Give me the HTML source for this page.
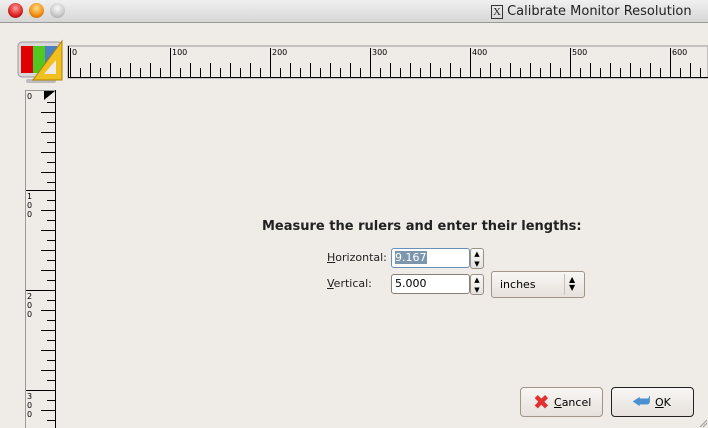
<!DOCTYPE html>
<html><head><style>
body{margin:0;width:708px;height:428px;background:#efebe7;font-family:"DejaVu Sans","Liberation Sans",sans-serif;overflow:hidden;position:relative}
.tb{position:absolute;left:0;top:0;width:708px;height:22px;background:linear-gradient(#f0f0f0,#d6d6d6);border-bottom:1px solid #9a9a9a}
.dot{position:absolute;top:3px;width:15px;height:15px;border-radius:50%}
.t{position:absolute;font-size:13px;color:#222}
.in{position:absolute;height:20px;background:#fff;border:1px solid #8a7f74;border-radius:3px;box-sizing:border-box;font-size:11px;line-height:18px;padding-left:3px}
.spin{position:absolute;width:14px;height:21px;border:1px solid #9a9086;border-radius:3px;background:linear-gradient(#fafafa,#e6e2de);box-sizing:border-box}
.btn{position:absolute;height:30px;border:1px solid #a09488;border-radius:4px;background:linear-gradient(#f8f6f4,#e6e1dc);box-sizing:border-box;font-size:11px}
</style></head><body>
<div class="tb">
<div class="dot" style="left:8px;background:radial-gradient(circle at 50% 35%,#ff9c9c,#d82020 60%,#8a0000)"></div>
<div class="dot" style="left:29px;background:radial-gradient(circle at 50% 35%,#ffe08a,#f08a10 60%,#a05000)"></div>
<div class="dot" style="left:50px;background:radial-gradient(circle at 50% 35%,#fafafa,#c8c8c8 60%,#909090)"></div>
<div class="t" style="left:491px;top:4px;font-size:13px"><span style="font-family:'Liberation Serif',serif;border:1px solid #333;font-size:11px;padding:0 1px">X</span> Calibrate Monitor Resolution</div>
</div>
<svg width="708" height="428" style="position:absolute;left:0;top:0">
<rect x="18" y="42" width="44" height="35" rx="4" fill="#d8d8d8" stroke="#999"/>
<rect x="21" y="46" width="12" height="27" fill="#e00000"/><rect x="33" y="46" width="12" height="27" fill="#50c820"/><rect x="45" y="46" width="12" height="27" fill="#4a80c0"/>
<rect x="26" y="79" width="30" height="4" rx="2" fill="#bbb"/>
<polygon points="62,41 62,80 33,80" fill="#f0c020" stroke="#b08000"/>
<polygon points="56,60 56,74 44,74" fill="#efebe7"/>
<rect x="68" y="46" width="640" height="32" fill="#efebe7" stroke="#999"/>
<line x1="68" y1="77.5" x2="708" y2="77.5" stroke="#000"/>
<line x1="68.5" y1="46" x2="68.5" y2="78" stroke="#000"/>
<g stroke="#000" stroke-width="1" font-size="8" font-family="DejaVu Sans" fill="#000">
<path d="M70.5 48V77M80.5 68V77M90.5 63V77M100.5 68V77M110.5 63V77M120.5 68V77M130.5 63V77M140.5 68V77M150.5 63V77M160.5 68V77M170.5 48V77M180.5 68V77M190.5 63V77M200.5 68V77M210.5 63V77M220.5 68V77M230.5 63V77M240.5 68V77M250.5 63V77M260.5 68V77M270.5 48V77M280.5 68V77M290.5 63V77M300.5 68V77M310.5 63V77M320.5 68V77M330.5 63V77M340.5 68V77M350.5 63V77M360.5 68V77M370.5 48V77M380.5 68V77M390.5 63V77M400.5 68V77M410.5 63V77M420.5 68V77M430.5 63V77M440.5 68V77M450.5 63V77M460.5 68V77M470.5 48V77M480.5 68V77M490.5 63V77M500.5 68V77M510.5 63V77M520.5 68V77M530.5 63V77M540.5 68V77M550.5 63V77M560.5 68V77M570.5 48V77M580.5 68V77M590.5 63V77M600.5 68V77M610.5 63V77M620.5 68V77M630.5 63V77M640.5 68V77M650.5 63V77M660.5 68V77M670.5 48V77M680.5 68V77M690.5 63V77M700.5 68V77"/>
<g stroke="none"><text x="72" y="55">0</text><text x="172" y="55">100</text><text x="272" y="55">200</text><text x="372" y="55">300</text><text x="472" y="55">400</text><text x="572" y="55">500</text><text x="672" y="55">600</text></g>
</g>
<rect x="25.5" y="90.5" width="30" height="340" fill="#efebe7" stroke="#999"/>
<line x1="55.5" y1="90" x2="55.5" y2="428" stroke="#000"/>
<polygon points="44,91 55,91 44,100" fill="#000"/>
<g stroke="#000">
<path d="M47 102.5H55M41 112.5H55M47 122.5H55M41 132.5H55M47 142.5H55M41 152.5H55M47 162.5H55M41 172.5H55M47 182.5H55M26 190.5H55M47 200.5H55M41 210.5H55M47 220.5H55M41 230.5H55M47 240.5H55M41 250.5H55M47 260.5H55M41 270.5H55M47 280.5H55M26 290.5H55M47 300.5H55M41 310.5H55M47 320.5H55M41 330.5H55M47 340.5H55M41 350.5H55M47 360.5H55M41 370.5H55M47 380.5H55M26 390.5H55M47 400.5H55M41 410.5H55M47 420.5H55"/>
</g>
<g font-size="8" font-family="DejaVu Sans" fill="#000">
<text x="27" y="99">0</text>
<text x="27" y="199">1</text><text x="27" y="208">0</text><text x="27" y="217">0</text>
<text x="27" y="299">2</text><text x="27" y="308">0</text><text x="27" y="317">0</text>
<text x="27" y="399">3</text><text x="27" y="408">0</text><text x="27" y="417">0</text>
</g>
<path d="M700 427L707 420M703 427L707 423" stroke="#999"/>
</svg>
<div class="t" style="left:262px;top:219px;font-weight:bold;font-size:13px">Measure the rulers and enter their lengths:</div>
<div class="t" style="left:327px;top:251px;font-size:11px"><u>H</u>orizontal:</div>
<div class="t" style="left:327px;top:277px;font-size:11px"><u>V</u>ertical:</div>
<div class="in" style="left:391px;top:248px;width:79px;border-color:#6a8fb8"><span style="background:#7c96ad;color:#fff">9.167</span></div>
<div class="spin" style="left:470px;top:248px"><div style="font-size:7px;line-height:10px;text-align:center">▲<br>▼</div></div>
<div class="in" style="left:391px;top:274px;width:79px">5.000</div>
<div class="spin" style="left:470px;top:274px"><div style="font-size:7px;line-height:10px;text-align:center">▲<br>▼</div></div>
<div class="btn" style="left:491px;top:271px;width:94px;height:27px;border-radius:3px"><span style="position:absolute;left:8px;top:6px">inches</span><span style="position:absolute;left:72px;top:2px;height:21px;border-left:1px solid #c8c0b8"></span><span style="position:absolute;left:77px;top:4px;font-size:8px;line-height:8px">▲<br>▼</span></div>
<div class="btn" style="left:520px;top:387px;width:83px"><span style="position:absolute;left:12px;top:2px;color:#e03030;font-size:20px;font-weight:bold">✖</span><span style="position:absolute;left:33px;top:8px"><u>C</u>ancel</span></div>
<div class="btn" style="left:611px;top:387px;width:83px;border:1px solid #222"><span style="position:absolute;left:20px;top:1px;color:#4a90d0;font-size:20px">⮨</span><span style="position:absolute;left:43px;top:8px"><u>O</u>K</span></div>
</body></html>
